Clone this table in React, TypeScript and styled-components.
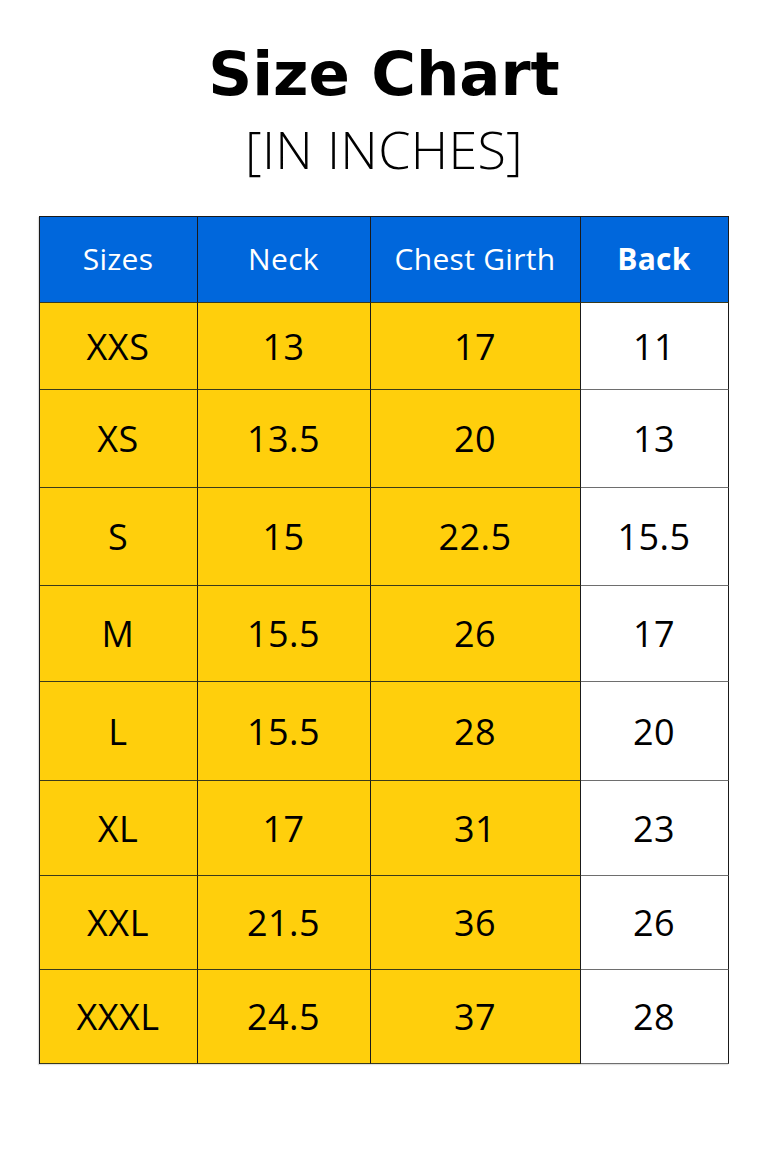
import React from "react";
import styled, { createGlobalStyle } from "styled-components";

const Global = createGlobalStyle`
  html, body { margin: 0; padding: 0; background: #ffffff; }
  body { font-family: "Open Sans", "Liberation Sans", sans-serif; color: #000; }
`;

const Page = styled.div`
  width: 768px;
  height: 1152px;
  display: flex;
  flex-direction: column;
  align-items: center;
  box-sizing: border-box;
  padding-top: 38px;
`;

const Title = styled.h1`
  margin: 0;
  font-family: "DejaVu Sans", "Open Sans", sans-serif;
  font-weight: 700;
  font-size: 61px;
  line-height: 72px;
  letter-spacing: 0px;
`;

const Subtitle = styled.div`
  font-family: "Open Sans", sans-serif;
  font-weight: 300;
  font-size: 52px;
  line-height: 60px;
  margin-top: 9px;
  letter-spacing: 0.3px;
`;

const Table = styled.div`
  margin-top: 37px;
  margin-right: 1px;
  display: grid;
  grid-template-columns: 158px 173px 210px 148px;
  border-top: 1px solid #1a1a1a;
  border-left: 1px solid #1a1a1a;
  box-shadow: -1px 1px 1px rgba(0, 0, 0, 0.12);
`;

const Cell = styled.div<{ $bg: string; $h: number; $head?: boolean; $bold?: boolean }>`
  box-sizing: border-box;
  height: ${(p) => p.$h}px;
  background: ${(p) => p.$bg};
  border-right: 1px solid #1a1a1a;
  border-bottom: 1px solid ${(p) => (p.$bg === "#ffffff" ? "#6e6e6e" : "#3a3a1a")};
  display: flex;
  align-items: center;
  justify-content: center;
  color: ${(p) => (p.$head ? "#ffffff" : "#000000")};
  font-family: "Open Sans", sans-serif;
  font-size: ${(p) => (p.$head ? "30px" : "36px")};
  font-weight: ${(p) => (p.$bold ? 700 : 500)};
  letter-spacing: ${(p) => (p.$head ? "0.3px" : "0.5px")};
  padding-bottom: ${(p) => (p.$head ? "2px" : "0")};
`;

const BLUE = "#0067dc";
const YELLOW = "#ffcf0c";
const WHITE = "#ffffff";

const headers = ["Sizes", "Neck", "Chest Girth", "Back"];
const rows: [string, string, string, string][] = [
  ["XXS", "13", "17", "11"],
  ["XS", "13.5", "20", "13"],
  ["S", "15", "22.5", "15.5"],
  ["M", "15.5", "26", "17"],
  ["L", "15.5", "28", "20"],
  ["XL", "17", "31", "23"],
  ["XXL", "21.5", "36", "26"],
  ["XXXL", "24.5", "37", "28"],
];
const heights = [87, 98, 98, 96, 99, 95, 94, 94];

export default function App() {
  return (
    <>
      <Global />
      <Page>
        <Title>Size Chart</Title>
        <Subtitle>[IN INCHES]</Subtitle>
        <Table>
          {headers.map((h, i) => (
            <Cell key={h} $bg={BLUE} $h={86} $head $bold={i === 3}>
              {h}
            </Cell>
          ))}
          {rows.map((r, ri) =>
            r.map((v, ci) => (
              <Cell key={`${ri}-${ci}`} $bg={ci === 3 ? WHITE : YELLOW} $h={heights[ri]}>
                {v}
              </Cell>
            ))
          )}
        </Table>
      </Page>
    </>
  );
}
